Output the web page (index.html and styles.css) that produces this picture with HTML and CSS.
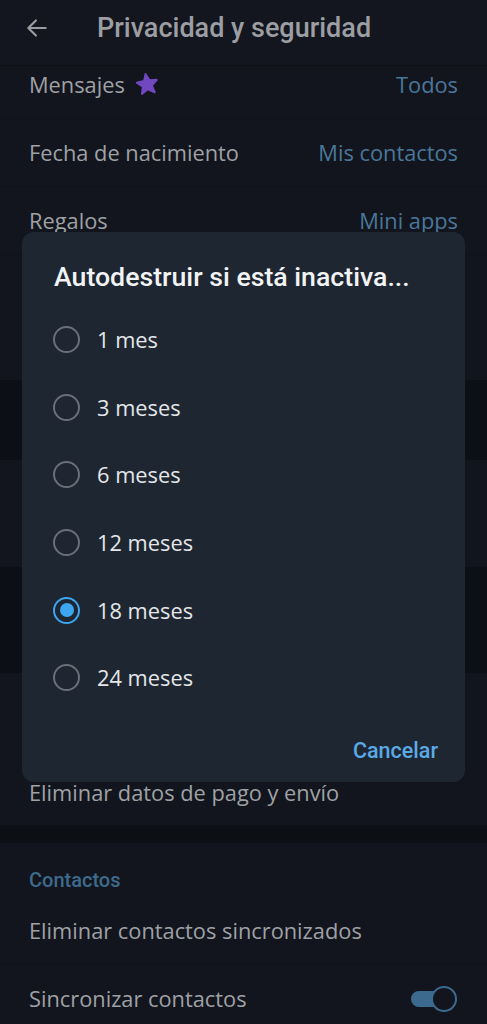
FILE: index.html
```html
<!DOCTYPE html>
<html lang="es">
<head>
<meta charset="utf-8">
<link rel="stylesheet" href="styles.css">
</head>
<body>
<div class="screen">
  <header class="topbar">
    <svg class="back" width="26" height="26" viewBox="0 0 24 24"><path d="M20 12H5M11 5l-7 7 7 7" fill="none" stroke="#9a9ca1" stroke-width="2" stroke-linecap="round" stroke-linejoin="round"/></svg>
    <h1 class="title">Privacidad y seguridad</h1>
  </header>
  <main class="list">
    <div class="row first">
      <span class="label">Mensajes <svg class="star" width="25" height="25" viewBox="0 0 24 24"><path d="M12.5 1.8l2.9 6.6 7 .5-5.3 4.7 1.7 7-6.2-3.8-6.2 3.6 1.8-6.9L3 8.9l7.1-.6z" fill="#7148c0" stroke="#7148c0" stroke-width="1.8" stroke-linejoin="round"/></svg></span>
      <span class="value">Todos</span>
    </div>
    <div class="row"><span class="label">Fecha de nacimiento</span><span class="value">Mis contactos</span></div>
    <div class="row"><span class="label">Regalos</span><span class="value">Mini apps</span></div>
    <div class="band h125"></div>
    <div class="band dark h80"></div>
    <div class="band h107"></div>
    <div class="band dark h106"></div>
    <div class="band h78"></div>
    <div class="row plain"><span class="label">Eliminar datos de pago y envío</span></div>
    <div class="gap"></div>
    <div class="section-title">Contactos</div>
    <div class="row sep"><span class="label">Eliminar contactos sincronizados</span></div>
    <div class="row"><span class="label">Sincronizar contactos</span>
      <span class="toggle"><span class="knob"></span></span>
    </div>
  </main>

  <div class="dialog">
    <h2 class="dlg-title">Autodestruir si está inactiva...</h2>
    <ul class="options">
      <li class="opt"><span class="radio"></span>1 mes</li>
      <li class="opt"><span class="radio"></span>3 meses</li>
      <li class="opt"><span class="radio"></span>6 meses</li>
      <li class="opt"><span class="radio"></span>12 meses</li>
      <li class="opt"><span class="radio on"></span>18 meses</li>
      <li class="opt"><span class="radio"></span>24 meses</li>
    </ul>
    <div class="actions"><span class="cancel">Cancelar</span></div>
  </div>
</div>
</body>
</html>
```
FILE: styles.css
```css
* { box-sizing: border-box; }
html, body { margin: 0; padding: 0; }
body { background: #11141c; font-family: Roboto, "Noto Sans", sans-serif; }
.screen { position: relative; width: 487px; height: 1024px; overflow: hidden; background: #11141c; }

.topbar { height: 66px; background: #13161e; border-bottom: 1px solid #0f1117; display: flex; align-items: center; padding: 0 0 0 24px; }
.back { margin-right: 47px; margin-top: -10px; }
.title { margin: -10px 0 0; font-size: 27px; font-weight: 500; color: #9c9ea3; }

.list { display: flex; flex-direction: column; }
.row { height: 68px; display: flex; align-items: center; justify-content: space-between; padding: 0 29px; background: #12151d; border-bottom: 1px solid #0f1218; }
.row.first { height: 53px; padding-bottom: 15px; }
.row.plain { height: 74px; padding-top: 8px; border-bottom: none; }
.label { font-family: "Open Sans", "Noto Sans", sans-serif; font-size: 21.8px; color: #9fa1a5; display: flex; align-items: center; }
.value { font-family: "Open Sans", "Noto Sans", sans-serif; font-size: 21.8px; color: #4a7799; }
.star { margin-left: 9px; transform: rotate(-8deg); }
.band { background: #12151d; }
.band.dark { background: #0c0f15; }
.h125 { height: 125px; }
.h80 { height: 80px; }
.h107 { height: 107px; }
.h106 { height: 106px; }
.h78 { height: 78px; }
.gap { height: 18px; background: #0c0f14; }
.section-title { height: 60px; padding: 14px 29px 0; font-size: 20px; font-weight: 500; color: #3e6a8c; background: #12151d; display: flex; align-items: center; }
.row.sep { height: 62px; padding-bottom: 6px; }

.toggle { position: relative; width: 46px; height: 26px; display: flex; align-items: center; margin-right: 1px; }
.toggle::before { content: ""; width: 36px; height: 16px; border-radius: 8px; background: #3c6a8f; }
.knob { position: absolute; right: 0; top: 0; width: 26px; height: 26px; border-radius: 50%; border: 2px solid #3c6a8f; background: #12151d; }

.dialog { position: absolute; left: 22px; top: 232px; width: 443px; height: 550px; background: #1e2632; border-radius: 12px; padding: 28px 27px 0 32px; display: flex; flex-direction: column; }
.dlg-title { margin: 0; font-size: 26.7px; font-weight: 500; color: #f2f3f5; line-height: 34px; }
.options { list-style: none; margin: 12px 0 0 -1px; padding: 0; display: flex; flex-direction: column; }
.opt { height: 67.6px; display: flex; align-items: center; font-family: "Open Sans", "Noto Sans", sans-serif; font-size: 21.8px; color: #e4e6e9; }
.radio { width: 27px; height: 27px; border-radius: 50%; border: 2.5px solid #6b7078; margin-right: 17px; display: flex; align-items: center; justify-content: center; }
.radio.on { border-color: #3ea5f0; }
.radio.on::after { content: ""; width: 14px; height: 14px; border-radius: 50%; background: #3ea5f0; }
.actions { display: flex; justify-content: flex-end; padding: 26px 0 0; }
.cancel { font-size: 21.5px; font-weight: 500; color: #5aaae6; }
```
